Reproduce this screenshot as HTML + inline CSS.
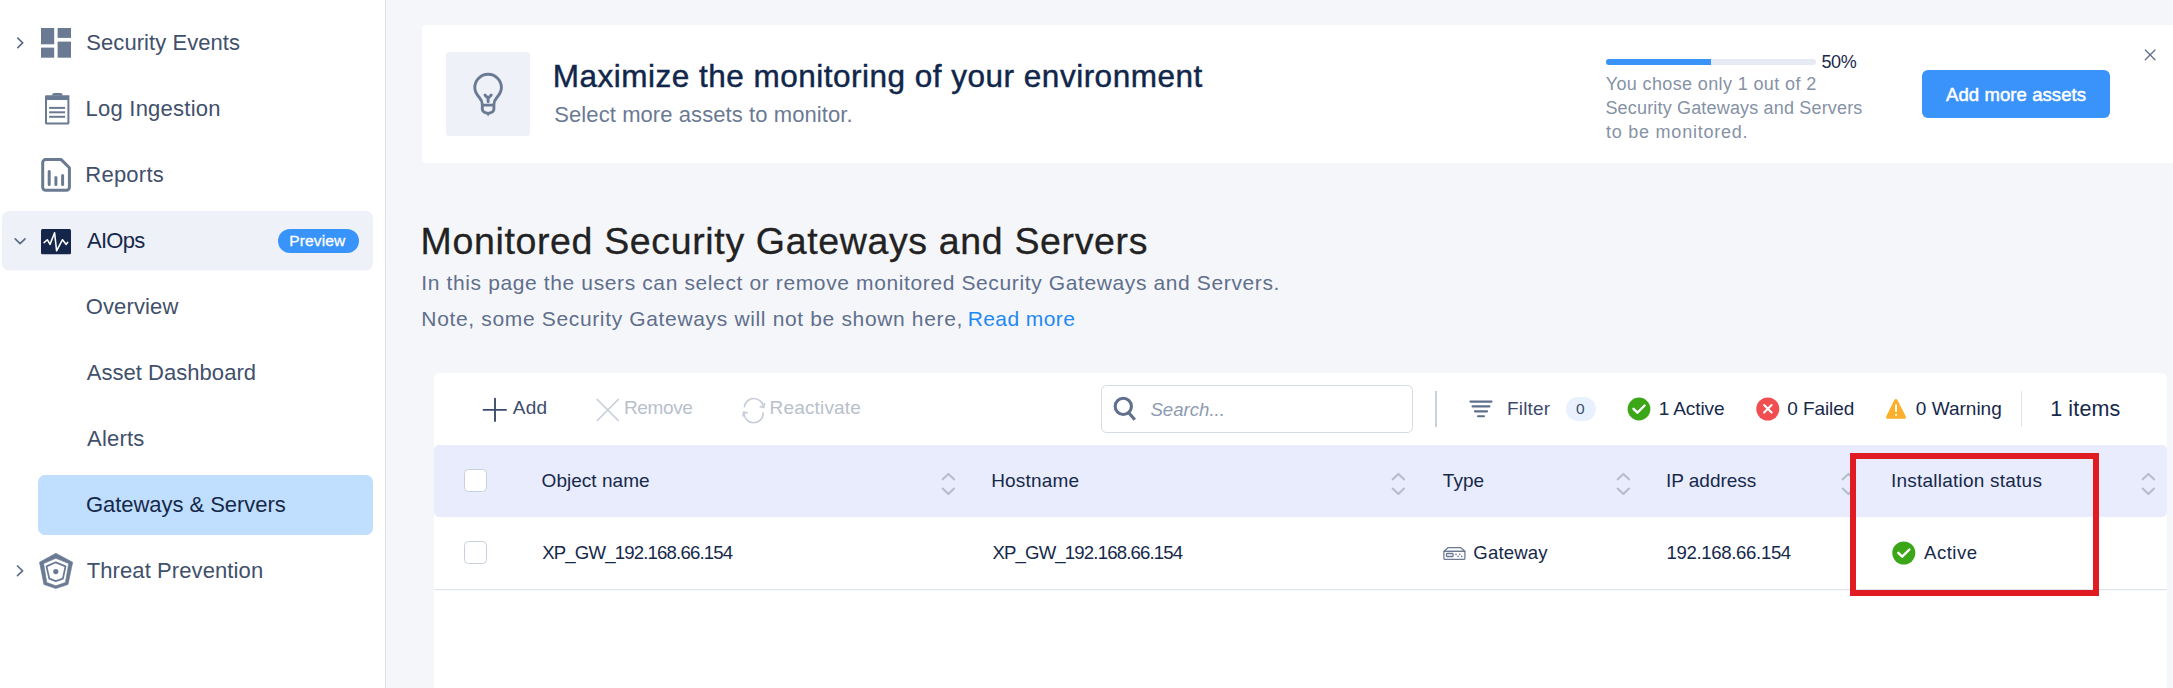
<!DOCTYPE html>
<html><head><meta charset="utf-8"><style>
html,body{margin:0;padding:0;width:2173px;height:688px;overflow:hidden;background:#f5f6fa;}
body{position:relative;font-family:"Liberation Sans",sans-serif;}
.t{position:absolute;line-height:1;white-space:nowrap;}
svg.bg{position:absolute;left:0;top:0;}
</style></head><body>
<svg class="bg" width="2173" height="688" viewBox="0 0 2173 688">
<!-- sidebar -->
<rect x="0" y="0" width="385" height="688" fill="#ffffff"/>
<rect x="385" y="0" width="1" height="688" fill="#dde2ea"/>
<!-- AIOps row -->
<rect x="2" y="211" width="371" height="59.5" rx="7" fill="#eef1f8"/>
<!-- Gateways active -->
<rect x="38" y="475" width="335" height="60" rx="7" fill="#c0defd"/>
<!-- chevrons -->
<path d="M17.8 38.1 L22.7 42.8 L17.8 47.6" fill="none" stroke="#5f6e88" stroke-width="1.7" stroke-linecap="round" stroke-linejoin="round"/>
<path d="M15.2 238.8 L20.1 243.7 L25 238.8" fill="none" stroke="#5f6e88" stroke-width="1.7" stroke-linecap="round" stroke-linejoin="round"/>
<path d="M17.5 566 L22.6 570.8 L17.5 575.6" fill="none" stroke="#5f6e88" stroke-width="1.7" stroke-linecap="round" stroke-linejoin="round"/>
<!-- security events icon -->
<g fill="#6b7a93">
<rect x="41" y="28" width="13.2" height="16.3"/>
<rect x="41" y="47.6" width="13.2" height="10.1"/>
<rect x="57.6" y="28" width="13.4" height="9.9"/>
<rect x="57.6" y="41.6" width="13.4" height="16.1"/>
</g>
<!-- log ingestion clipboard -->
<g fill="#6b7a93">
<path d="M45 96.5 a1.3 1.3 0 0 1 1.3 -1.3 H69.4 V122.9 a1.7 1.7 0 0 1 -1.7 1.7 H46.7 a1.7 1.7 0 0 1 -1.7 -1.7 Z M47 100 V122.6 H67.4 V100 Z" fill-rule="evenodd"/>
<path d="M52 95.5 Q52 93.1 54.4 93.1 H60.3 Q62.7 93.1 62.7 95.5 Z"/>
<rect x="49.1" y="106.9" width="16" height="2"/>
<rect x="49.1" y="111.3" width="16" height="2"/>
<rect x="49.1" y="115.8" width="16" height="2"/>
</g>
<!-- reports icon -->
<g fill="none" stroke="#6b7a93" stroke-width="3" stroke-linecap="round" stroke-linejoin="round">
<path d="M45.7 159.6 H61.2 L69.4 167.8 V187.3 a3 3 0 0 1 -3 3 H45.7 a3 3 0 0 1 -3 -3 V162.6 a3 3 0 0 1 3 -3 Z"/>
<path d="M49.2 171.5 V184.6"/>
<path d="M55.9 177.6 V184.6"/>
<path d="M62.6 175.5 V184.6"/>
</g>
<!-- aiops icon -->
<rect x="41" y="229" width="30" height="25.3" rx="1.5" fill="#14264a"/>
<path d="M44.1 242.6 L47.3 239.7 L50 244.4 L54.6 232.8 L56.6 250.8 L62.5 239.7 L66.2 244.4 L67.7 242.3" fill="none" stroke="#fff" stroke-width="1.55" stroke-linejoin="round" stroke-linecap="round"/>
<!-- preview pill -->
<rect x="278" y="229" width="81" height="24" rx="12" fill="#3894fb"/>
<!-- threat prevention shield -->
<g fill="none" stroke="#6b7a93" stroke-linejoin="round">
</g><path d="M55.8 553.3 L39.5 562.2 L43.9 584.5 L55.8 588.6 L68 584.5 L72.7 562.2 Z M55.8 558.3 L43.6 563.6 L46.8 582.4 L55.8 585.8 L65.4 582.4 L68.7 563.6 Z" fill="#6b7a93" fill-rule="evenodd" stroke="#6b7a93" stroke-width="0.6" stroke-linejoin="round"/><g fill="none" stroke="#6b7a93" stroke-linejoin="round">
<path d="M55.8 562.3 L46.5 566.4 L49.3 578.6 L55.8 581.2 L62.9 578.6 L65.5 566.4 Z" stroke-width="1.8"/>
</g>
<circle cx="55.8" cy="571.6" r="2.6" fill="#6b7a93"/>

<!-- banner card -->
<path d="M426 25 H2173 V163 H426 a4 4 0 0 1 -4 -4 V29 a4 4 0 0 1 4 -4 Z" fill="#ffffff"/>
<rect x="446" y="52" width="84" height="84" rx="3" fill="#eef1f8"/>
<!-- bulb -->
<g transform="translate(0,0.9)"><g fill="none" stroke="#6b7a93" stroke-width="2.9" stroke-linecap="round" stroke-linejoin="round">
<path d="M482.3 108 V103.5 Q482.3 100 479.5 96.8 Q474.8 91.8 474.8 86.7 A13.3 13.3 0 0 1 501.4 86.7 Q501.4 91.8 496.7 96.8 Q493.9 100 493.9 103.5 V108 Q493.9 111.5 488.1 112.5 Q482.3 111.5 482.3 108 Z"/>
<path d="M482.5 104.2 H493.7"/>
<path d="M485 94.2 L488.1 97.3 L491.2 94.2 M488.1 97.3 V100.8"/>
</g>
<path d="M486.3 112.3 L488.1 115.6 L489.9 112.3 Z" fill="#6b7a93"/></g>
<!-- progress -->
<rect x="1606" y="59" width="210" height="6" rx="3" fill="#e6eaf2"/>
<path d="M1609 59 H1711 V65 H1609 a3 3 0 0 1 0 -6 Z" fill="#3a93f8"/>
<!-- button -->
<rect x="1922" y="70" width="188" height="48" rx="6" fill="#3a93fa"/>
<!-- close -->
<path d="M2145.3 50 L2155 59.7 M2155 50 L2145.3 59.7" stroke="#5f6f8c" stroke-width="1.3" stroke-linecap="round"/>

<!-- table card -->
<path d="M439 373 H2161 a6 6 0 0 1 6 6 V688 H434 V378 a5 5 0 0 1 5 -5 Z" fill="#ffffff"/>
<!-- add -->
<path d="M483.6 409.9 H506 M495 398.6 V421" stroke="#3d4c6b" stroke-width="1.9" stroke-linecap="round"/>
<!-- remove -->
<path d="M597.3 399.5 L618.3 420.5 M618.3 399.5 L597.3 420.5" stroke="#c7ced9" stroke-width="1.7" stroke-linecap="round"/>
<!-- reactivate -->
<g fill="none" stroke="#c7ced9" stroke-width="1.7" stroke-linecap="round" stroke-linejoin="round">
<path d="M744.4 406.6 A9.6 9.6 0 0 1 763.4 406.8"/>
<path d="M760.3 406.6 L763.7 407.5 L764.5 403.8"/>
<path d="M763.2 413 A9.6 9.6 0 0 1 744 413.3"/>
<path d="M747.1 412.8 L743.6 412.1 L743.2 415.8"/>
</g>
<!-- search box -->
<rect x="1101.5" y="385.5" width="311" height="47" rx="5" fill="#fff" stroke="#d5dbe6" stroke-width="1"/>
<g fill="none" stroke="#5f6f8c" stroke-width="3.1">
<circle cx="1123.3" cy="406.4" r="8.1"/>
<path d="M1129.2 413.2 L1134.8 419.8"/>
</g>
<!-- divider -->
<rect x="1435" y="391" width="2" height="36" fill="#c9d1de"/>
<!-- filter icon -->
<g stroke="#5f6f8c" stroke-width="2.1" stroke-linecap="round">
<path d="M1470.4 401.6 H1491.5"/>
<path d="M1472.6 406.4 H1489.4"/>
<path d="M1475 411.4 H1487"/>
<path d="M1478 416.2 H1484"/>
</g>
<rect x="1566" y="397" width="30" height="24" rx="12" fill="#e8f1fd"/>
<!-- active check -->
<circle cx="1639" cy="409" r="11.4" fill="#3aa618"/>
<path d="M1633.5 408.8 L1637.4 412.7 L1644.6 405.5" fill="none" stroke="#fff" stroke-width="2.4" stroke-linecap="round" stroke-linejoin="round"/>
<!-- failed -->
<circle cx="1767.8" cy="409" r="11.5" fill="#f04e50"/>
<path d="M1764.1 405.1 L1771.6 412.6 M1771.6 405.1 L1764.1 412.6" stroke="#fff" stroke-width="2.1" stroke-linecap="round"/>
<!-- warning -->
<path d="M1894 400.4 Q1895.9 397.6 1897.7 400.4 L1905.6 415.9 Q1906.9 418.7 1903.8 418.7 H1888.2 Q1885.1 418.7 1886.4 415.9 Z" fill="#fbb02d"/>
<rect x="1895.1" y="404.6" width="1.9" height="7.2" fill="#fff"/>
<rect x="1895.1" y="414" width="1.9" height="1.7" fill="#fff"/>
<!-- divider 2 -->
<rect x="2021" y="391" width="1" height="35.5" fill="#dfe4ec"/>

<!-- header -->
<path d="M439 445 H2162 a5 5 0 0 1 5 5 V512 a5 5 0 0 1 -5 5 H439 a5 5 0 0 1 -5 -5 V450 a5 5 0 0 1 5 -5 Z" fill="#e9ecfc"/>
<rect x="464.5" y="469.5" width="22" height="22" rx="4" fill="#fff" stroke="#c8d0dd" stroke-width="1"/>
<rect x="464.5" y="541.5" width="22" height="22" rx="4" fill="#fff" stroke="#c8d0dd" stroke-width="1"/>
<g fill="none" stroke="#b3bdcb" stroke-width="2.1" stroke-linecap="round" stroke-linejoin="round">
<path d="M942.7 479.3 L948.4 473.9 L954 479.3 M942.7 488.5 L948.4 493.9 L954 488.5"/>
<path d="M1392.7 479.3 L1398.4 473.9 L1404 479.3 M1392.7 488.5 L1398.4 493.9 L1404 488.5"/>
<path d="M1617.7 479.3 L1623.4 473.9 L1629 479.3 M1617.7 488.5 L1623.4 493.9 L1629 488.5"/>
<path d="M1842.7 479.3 L1848.4 473.9 L1854 479.3 M1842.7 488.5 L1848.4 493.9 L1854 488.5"/>
<path d="M2142.7 479.3 L2148.4 473.9 L2154 479.3 M2142.7 488.5 L2148.4 493.9 L2154 488.5"/>
</g>
<!-- row border -->
<rect x="434" y="589" width="1733" height="1.2" fill="#dde3ec"/>
<!-- gateway icon -->
<g fill="none" stroke="#6b7a93" stroke-width="1.3" stroke-linejoin="round">
<path d="M1448.3 547.6 H1460.5 L1464.9 551.3 H1443.9 Z"/>
<rect x="1443.9" y="551.3" width="21" height="8" rx="0.8"/>
<rect x="1446.5" y="553.5" width="6.5" height="3" rx="0.5"/>
</g>
<g fill="#6b7a93">
<circle cx="1456" cy="554.4" r="0.8"/><circle cx="1459.8" cy="554.4" r="0.8"/>
<circle cx="1458" cy="556.4" r="0.8"/><circle cx="1461.7" cy="556.4" r="0.8"/>
</g>
<!-- row active check -->
<circle cx="1903.8" cy="553" r="11.5" fill="#3aa618"/>
<path d="M1898.3 552.8 L1902.2 556.7 L1909.4 549.5" fill="none" stroke="#fff" stroke-width="2.4" stroke-linecap="round" stroke-linejoin="round"/>
<!-- red highlight -->
<rect x="1853" y="456" width="243" height="137" fill="none" stroke="#e01b22" stroke-width="6"/>
</svg>

<div id="t_se" class="t" style="left:86.31px;top:32.00px;font-size:22px;font-weight:400;font-style:normal;color:#41506b;letter-spacing:0.060px;">Security Events</div>
<div id="t_li" class="t" style="left:85.48px;top:98.00px;font-size:22px;font-weight:400;font-style:normal;color:#41506b;letter-spacing:0.246px;">Log Ingestion</div>
<div id="t_rp" class="t" style="left:85.28px;top:164.00px;font-size:22px;font-weight:400;font-style:normal;color:#41506b;letter-spacing:0.246px;">Reports</div>
<div id="t_ai" class="t" style="left:87.00px;top:230.00px;font-size:22px;font-weight:400;font-style:normal;color:#16294b;letter-spacing:-0.737px;">AIOps</div>
<div id="t_ov" class="t" style="left:85.67px;top:296.00px;font-size:22px;font-weight:400;font-style:normal;color:#41506b;letter-spacing:0.140px;">Overview</div>
<div id="t_ad" class="t" style="left:86.70px;top:362.00px;font-size:22px;font-weight:400;font-style:normal;color:#41506b;letter-spacing:0.041px;">Asset Dashboard</div>
<div id="t_al" class="t" style="left:87.00px;top:428.00px;font-size:22px;font-weight:400;font-style:normal;color:#41506b;letter-spacing:0.210px;">Alerts</div>
<div id="t_gs" class="t" style="left:85.97px;top:494.00px;font-size:22px;font-weight:400;font-style:normal;color:#16294b;letter-spacing:-0.047px;">Gateways &amp; Servers</div>
<div id="t_tp" class="t" style="left:86.66px;top:560.00px;font-size:22px;font-weight:400;font-style:normal;color:#41506b;letter-spacing:0.100px;">Threat Prevention</div>
<div id="t_pv" class="t" style="left:289.19px;top:233.00px;font-size:15.5px;font-weight:400;font-style:normal;color:#ffffff;letter-spacing:0.166px;-webkit-text-stroke:0.3px #fff;">Preview</div>
<div id="t_mx" class="t" style="left:552.74px;top:61.00px;font-size:31.5px;font-weight:400;font-style:normal;color:#10264a;letter-spacing:0.498px;-webkit-text-stroke:0.45px #10264a;">Maximize the monitoring of your environment</div>
<div id="t_sm" class="t" style="left:554.31px;top:104.00px;font-size:22px;font-weight:400;font-style:normal;color:#6b7a93;letter-spacing:0.082px;">Select more assets to monitor.</div>
<div id="t_50" class="t" style="left:1821.44px;top:53.00px;font-size:18px;font-weight:400;font-style:normal;color:#1b2a4a;letter-spacing:-0.364px;">50%</div>
<div id="t_p1" class="t" style="left:1605.72px;top:75.00px;font-size:18px;font-weight:400;font-style:normal;color:#8592a6;letter-spacing:0.372px;">You chose only 1 out of 2</div>
<div id="t_p2" class="t" style="left:1605.44px;top:99.00px;font-size:18px;font-weight:400;font-style:normal;color:#8592a6;letter-spacing:0.172px;">Security Gateways and Servers</div>
<div id="t_p3" class="t" style="left:1606.00px;top:123.00px;font-size:18px;font-weight:400;font-style:normal;color:#8592a6;letter-spacing:0.763px;">to be monitored.</div>
<div id="t_am" class="t" style="left:1946.00px;top:86.00px;font-size:18.5px;font-weight:400;font-style:normal;color:#ffffff;letter-spacing:0.090px;-webkit-text-stroke:0.5px #fff;">Add more assets</div>
<div id="t_ti" class="t" style="left:420.57px;top:223.00px;font-size:37.5px;font-weight:400;font-style:normal;color:#222222;letter-spacing:0.645px;-webkit-text-stroke:0.3px #222;">Monitored Security Gateways and Servers</div>
<div id="t_d1" class="t" style="left:421.36px;top:272.00px;font-size:21px;font-weight:400;font-style:normal;color:#5f6f8c;letter-spacing:0.620px;">In this page the users can select or remove monitored Security Gateways and Servers.</div>
<div id="t_d2" class="t" style="left:421.36px;top:308.00px;font-size:21px;font-weight:400;font-style:normal;color:#5f6f8c;letter-spacing:0.652px;">Note, some Security Gateways will not be shown here,</div>
<div id="t_rm" class="t" style="left:967.66px;top:308.00px;font-size:21px;font-weight:400;font-style:normal;color:#1e88f5;letter-spacing:0.414px;">Read more</div>
<div id="t_add" class="t" style="left:512.80px;top:398.00px;font-size:19px;font-weight:400;font-style:normal;color:#3d4c6b;letter-spacing:0.230px;">Add</div>
<div id="t_rem" class="t" style="left:624.02px;top:398.00px;font-size:19px;font-weight:400;font-style:normal;color:#b8c0cc;letter-spacing:-0.379px;">Remove</div>
<div id="t_rea" class="t" style="left:769.62px;top:398.00px;font-size:19px;font-weight:400;font-style:normal;color:#b8c0cc;letter-spacing:0.154px;">Reactivate</div>
<div id="t_sea" class="t" style="left:1150.41px;top:401.00px;font-size:18.6px;font-weight:400;font-style:italic;color:#8e9bb0;letter-spacing:0.014px;">Search...</div>
<div id="t_fil" class="t" style="left:1507.12px;top:399.00px;font-size:19px;font-weight:400;font-style:normal;color:#3d4c6b;letter-spacing:0.151px;">Filter</div>
<div id="t_b0" class="t" style="left:1576.02px;top:401.00px;font-size:15.5px;font-weight:400;font-style:normal;color:#3d4c6b;letter-spacing:0.000px;">0</div>
<div id="t_act" class="t" style="left:1658.71px;top:399.00px;font-size:19px;font-weight:400;font-style:normal;color:#16294b;letter-spacing:-0.104px;">1 Active</div>
<div id="t_fai" class="t" style="left:1787.21px;top:399.00px;font-size:19px;font-weight:400;font-style:normal;color:#16294b;letter-spacing:-0.076px;">0 Failed</div>
<div id="t_war" class="t" style="left:1915.81px;top:399.00px;font-size:19px;font-weight:400;font-style:normal;color:#16294b;letter-spacing:0.009px;">0 Warning</div>
<div id="t_itm" class="t" style="left:2050.16px;top:399.00px;font-size:21.5px;font-weight:400;font-style:normal;color:#16294b;letter-spacing:0.136px;">1 items</div>
<div id="t_h1" class="t" style="left:541.61px;top:471.00px;font-size:19px;font-weight:400;font-style:normal;color:#16294b;letter-spacing:0.024px;">Object name</div>
<div id="t_h2" class="t" style="left:991.22px;top:471.00px;font-size:19px;font-weight:400;font-style:normal;color:#16294b;letter-spacing:0.180px;">Hostname</div>
<div id="t_h3" class="t" style="left:1442.80px;top:471.00px;font-size:19px;font-weight:400;font-style:normal;color:#16294b;letter-spacing:0.025px;">Type</div>
<div id="t_h4" class="t" style="left:1666.12px;top:471.00px;font-size:19px;font-weight:400;font-style:normal;color:#16294b;letter-spacing:-0.050px;">IP address</div>
<div id="t_h5" class="t" style="left:1890.92px;top:471.00px;font-size:19px;font-weight:400;font-style:normal;color:#16294b;letter-spacing:0.232px;">Installation status</div>
<div id="t_c1" class="t" style="left:542.21px;top:544.00px;font-size:18.6px;font-weight:400;font-style:normal;color:#16294b;letter-spacing:-0.835px;">XP_GW_192.168.66.154</div>
<div id="t_c2" class="t" style="left:992.41px;top:544.00px;font-size:18.6px;font-weight:400;font-style:normal;color:#16294b;letter-spacing:-0.845px;">XP_GW_192.168.66.154</div>
<div id="t_c3" class="t" style="left:1473.33px;top:544.00px;font-size:18.6px;font-weight:400;font-style:normal;color:#16294b;letter-spacing:0.128px;">Gateway</div>
<div id="t_c4" class="t" style="left:1666.44px;top:544.00px;font-size:18.6px;font-weight:400;font-style:normal;color:#16294b;letter-spacing:-0.344px;">192.168.66.154</div>
<div id="t_c5" class="t" style="left:1924.00px;top:544.00px;font-size:18.6px;font-weight:400;font-style:normal;color:#16294b;letter-spacing:0.501px;">Active</div>
</body></html>
